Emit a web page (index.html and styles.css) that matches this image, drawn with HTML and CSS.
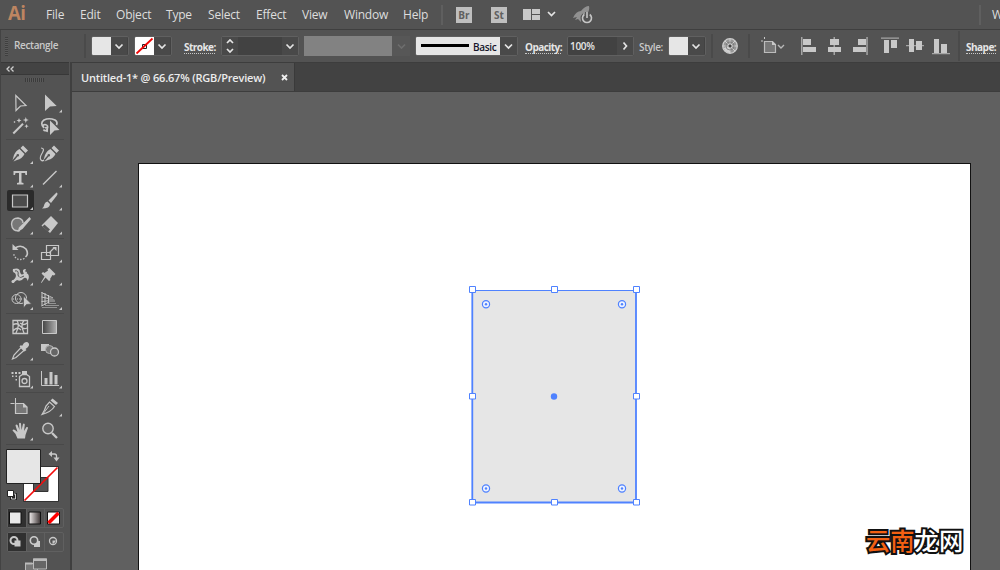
FILE: index.html
```html
<!DOCTYPE html>
<html lang="en">
<head>
<meta charset="utf-8">
<title>Untitled-1</title>
<link rel="stylesheet" href="styles.css">
</head>
<body>
<div class="app">
  <header class="menubar">
    <span class="logo">Ai</span>
    <nav class="menus">
      <span class="m-file">File</span><span class="m-edit">Edit</span><span class="m-object">Object</span><span class="m-type">Type</span><span class="m-select">Select</span><span class="m-effect">Effect</span><span class="m-view">View</span><span class="m-window">Window</span><span class="m-help">Help</span>
    </nav>
    <i class="vline"></i>
    <span class="badge br">Br</span>
    <span class="badge st">St</span>
    <svg class="workspace" width="34" height="14" viewBox="0 0 34 14"><path class="f" d="M0 2h8v11H0zM9 2h8v5H9zM9 8h8v5H9z"/><path class="chev" d="M25 5l3.5 3.5L32 5"/></svg>
    <svg class="rocket" width="22" height="20" viewBox="0 0 22 20"><path fill="#919191" d="M1 13Q4 6 9 6Q13 1 17 1Q18 5 15 9L10 10Q9 14 9 17L6 14L3 15L5 12Z"/><path fill="none" stroke="#535353" stroke-width="4" d="M12 10a4.5 4.5 0 1 0 6 0M15 7v6"/><path fill="none" stroke="#c5c5c5" stroke-width="1.6" d="M12.2 9.500a4.500 4.500 0 1 0 5.600 0M15 7v6"/></svg>
    <i class="vline far"></i>
    <span class="search">Web</span>
  </header>

  <div class="control">
    <i class="grip"></i>
    <span class="kind">Rectangle</span>
    <i class="sep"></i>
    <div class="combo fillbox"><i class="sw"></i><svg class="drop" width="16" height="18" viewBox="0 0 16 18"><path class="chev" d="M4.500 7.500L8 11L11.500 7.500"/></svg></div>
    <div class="combo strokebox"><svg width="19" height="18" viewBox="0 0 19 18"><path fill="#fff" d="M0 0h19v18H0z"/><path fill="none" stroke="#222" d="M7.500 7.500h4v4h-4z"/><path stroke="#f00505" stroke-width="1.800" d="M1.500 16.500L17.500 1.500"/></svg><svg class="drop" width="16" height="18" viewBox="0 0 16 18"><path class="chev" d="M4.500 7.500L8 11L11.500 7.500"/></svg></div>
    <span class="lbl stroke-lbl">Stroke:</span>
    <div class="combo weight"><svg width="16" height="18" viewBox="0 0 16 18"><path class="chev" d="M5 6L8 3L11 6M5 12L8 15L11 12"/></svg><i class="field"></i><svg class="drop" width="16" height="18" viewBox="0 0 16 18"><path class="chev" d="M4.500 7.500L8 11L11.500 7.500"/></svg></div>
    <div class="profile"><i></i><svg width="18" height="20" viewBox="0 0 18 20"><path class="chev off" d="M6 8.500L9.500 12L13 8.500"/></svg></div>
    <div class="combo brush"><span class="basic"><i></i>Basic</span><svg class="drop" width="17" height="18" viewBox="0 0 17 18"><path class="chev" d="M5 7.500L8.500 11L12 7.500"/></svg></div>
    <span class="lbl opacity-lbl">Opacity:</span>
    <div class="combo opacity"><span class="pct">100%</span><svg class="drop" width="16" height="18" viewBox="0 0 16 18"><path class="chev" d="M6.500 5.500L9.500 9L6.500 12.500"/></svg></div>
    <span class="style-lbl">Style:</span>
    <div class="combo stylebox"><i class="sw"></i><svg class="drop" width="16" height="18" viewBox="0 0 16 18"><path class="chev" d="M4.500 7.500L8 11L11.500 7.500"/></svg></div>
    <i class="sep s2"></i>
    <svg class="wheel" width="16" height="16" viewBox="0 0 16 16"><circle cx="8" cy="8" r="7.300" fill="#979797" stroke="#cdcdcd" stroke-width="1.300"/><path stroke="#d0d0d0" d="M8 1v14M1 8h14M3 3l10 10M13 3L3 13"/><path fill="#d0d0d0" d="M8 8L1.500 10Q4 15 8 15z"/><circle cx="8" cy="8" r="4" fill="none" stroke="#777" stroke-width=".8"/><circle cx="8" cy="8" r="1.500" fill="#444"/></svg>
    <i class="sep s3"></i>
    <svg class="bounds" width="25" height="18" viewBox="0 0 25 18"><path fill="#777" stroke="#bcbcbc" stroke-width="1.200" d="M3.500 4.500h8l3 3v8h-11z"/><path fill="#c8c8c8" d="M11 4l4 4h-4zM3 0h1v2H3zM0 3.500h2v1H0z"/><path class="chev thin" d="M17 8l3 3l3-3"/></svg>
    <svg class="align" width="150" height="19" viewBox="0 0 150 19"><path fill="#a5a5a5" d="M0 1h1.500v18H0zM32.500 1h1.500v18h-1.500zM65.300 1h1.500v18h-1.500zM80 1.500h18v1.300H80zM105 9h18v1.300h-18zM131 17h18v1.300h-18z"/><path fill="#c8c8c8" d="M2 3h8v6H2zM2 11h13v5H2zM29 3h9v6h-9zM27 11h13v5H27zM57 3h8v6h-8zM52 11h13v5H52zM83 4h5v13h-5zM90 4h6v8h-6zM108 3h5v13h-5zM115 5h6v9h-6zM133 3h5v14h-5zM140 8h6v9h-6z"/></svg>
    <i class="sep s4"></i>
    <span class="lbl shape-lbl">Shape:</span>
  </div>

  <div class="workarea">
    <aside class="tools">
      <div class="collapse"><svg width="9" height="6" viewBox="0 0 9 6"><path fill="none" stroke="#d0d0d0" stroke-width="1.300" d="M3.500 .5L1 3l2.500 2.500M7.500 .5L5 3l2.500 2.500"/></svg></div>
      <div class="handle"><i></i></div>
      <div class="toolgrid">
        <svg viewBox="0 0 29 24"><path class="l" stroke-width="1.200" d="M9.800 4.500L20 14.500L14.500 15L10 19.500z"/></svg>
        <svg viewBox="0 0 29 24"><path class="f" d="M10 3.500L21.700 15L15 15.500L10 20z"/><path class="t" d="M27 18.500v3h-3z"/></svg>
        <svg viewBox="0 0 29 23"><path class="l" stroke-width="2" d="M7.300 18.500L17 8.800"/><path class="f" d="M19.800 2l.8 2.200 2.200.8-2.200.8-.8 2.200-.8-2.200-2.200-.8 2.200-.8zM13 3l.7 1.800 1.800.7-1.800.7L13 8l-.7-1.800-1.800-.7 1.800-.7zM20.500 9l.6 1.600 1.600.6-1.600.6-.6 1.600-.6-1.600-1.600-.6 1.600-.6zM8.500 6l1 1-1 1-1-1z"/></svg>
        <svg viewBox="0 0 29 23"><path class="l" stroke-width="1.700" d="M9 13Q4.500 8 9 5Q14 2.500 20 5Q23 7 21.500 10M9 13Q6.500 10 10 9.500Q14 10 12 14.500Q10 17 8.500 14.500M10 13Q13 11 12 17"/><path class="f" d="M15 5.500L24.500 15L19.500 15.500L15 20z"/></svg>
        <i class="rule"></i>
        <svg viewBox="0 0 29 24"><path class="f" d="M17 3.500L22 8.500L19.500 11L14.500 6zM13.500 7L18.500 12Q16 17 11 18L7.500 19.500L11.500 14.500A1.300 1.300 0 1 0 10.500 13.500L6.500 18L8 13Q10 8.500 13.500 7z"/><path class="t" d="M27 19v3h-3z"/></svg>
        <svg viewBox="0 0 29 24"><path class="f" d="M19 3.500L24 8.500L21.500 11L16.500 6zM15.500 7L20.500 12Q18 17 13 18L9.500 19.500L13.500 14.500A1.300 1.300 0 1 0 12.500 13.500L8.500 18L10 13Q12 8.500 15.500 7z"/><path class="l" stroke-width="1.200" d="M6 6Q10 6 7.500 10.500Q4 16 6 18Q7.500 19.500 9 18"/></svg>
        <svg viewBox="0 0 29 24"><path class="f" d="M7.500 5H21v4h-1.500L19 7h-3.500v9.500l2 .5v1.500h-6.500V17l2-.5V7H9.500L9 9H7.500z"/><path class="t" d="M27 18.500v3h-3z"/></svg>
        <svg viewBox="0 0 29 24"><path class="l" stroke-width="1.400" d="M8 18.500L21.500 5"/><path class="t" d="M27 18.500v3h-3z"/></svg>
        <svg class="active" viewBox="0 0 27 21"><path fill="#4b4b4b" stroke="#c8c8c8" stroke-width="1.200" d="M5.500 5h15v12h-15z"/><path class="t" d="M26 17v3h-3z"/></svg>
        <svg viewBox="0 0 29 23"><path class="f" d="M21.500 2.500Q23.500 3.500 21.500 6L16 13L13.500 10.500zM12.500 11.500L15 14Q15 18.500 7 18.500Q9 17 9.500 14Q10.500 11.500 12.500 11.500z"/><path class="t" d="M27 17.500v3h-3z"/></svg>
        <svg viewBox="0 0 29 24"><path fill="#777" stroke="#c3c3c3" stroke-width="1.400" d="M14 17.500Q6 19 5.500 11Q6 5 12 5Q17 6 17 10"/><path class="f" d="M23.500 4L25 6L16.500 16L11.500 19L13 14.500z"/><path class="t" d="M27 18.500v3h-3z"/></svg>
        <svg viewBox="0 0 29 24"><path class="f" d="M16 3L23 10L15 20L6.500 12.500z"/><path fill="#555" d="M9.500 11.500L15 16.500L13 18.500L7.500 13.500z"/><path class="t" d="M27 18.500v3h-3z"/></svg>
        <i class="rule"></i>
        <svg viewBox="0 0 29 24"><path class="l" stroke-width="1.600" d="M9 7Q15 3 20 8Q23 13 19.500 16"/><path class="l" stroke-width="1.300" stroke-dasharray="1.500 1.500" d="M18.500 17.500Q10 21 7.500 12.500"/><path class="f" d="M6.500 3v6h6z"/><path class="t" d="M27 18.500v3h-3z"/></svg>
        <svg viewBox="0 0 29 24"><path class="l" stroke-width="1.200" d="M11.500 4.500h12v10h-12zM6.500 11.500h9v7h-9zM14 12l5-5"/><path class="f" d="M21.500 6v4l-4-4z"/><path class="t" d="M27 18.500v3h-3z"/></svg>
        <svg viewBox="0 0 29 23"><path class="f" d="M7 4Q14 2 14 7Q15 11 18 9Q15 4 20 4Q18 7 22 9Q24 12 21.500 16Q21 12 18 13Q15 17 11 15L7 18L6 16Q12 12 9 8Q6 7 7 4z"/><path stroke="#535353" fill="none" d="M9 6Q13 5 12 10Q13 14 18 11"/><path class="l" d="M6 17L21 7"/><circle class="f" cx="7" cy="16.500" r="1.500"/><path class="t" d="M27 17.500v3h-3z"/></svg>
        <svg viewBox="0 0 29 23"><path class="f" d="M14.500 3L20.500 9L19 10.500L17.500 10L15 14L15.500 15L14 16L10.500 12.500L6.500 18L6 17.500L9.500 11.500L6.500 8.500L8 7L9.500 8L13 5.500L12.500 4z"/><path class="t" d="M27 17.500v3h-3z"/></svg>
        <svg viewBox="0 0 29 24"><circle class="l" cx="10.500" cy="11" r="4.500"/><ellipse class="l" cx="15" cy="10" rx="5.500" ry="5.500"/><path class="l" stroke-dasharray="1 1" d="M7 11h11"/><path class="f" stroke="#535353" stroke-width=".7" d="M17.500 8L25.500 16L20.500 16.500L17.500 20z"/><path class="t" d="M27 19v3h-3z"/></svg>
        <svg viewBox="0 0 29 24"><path class="l" d="M7 4v14M10 5v12M13.500 7v8M6.500 4.500L18 10M6.500 9L18 11.500M6.500 13.500L17 12.500M6.500 18L16 13"/><path fill="#858585" d="M14 8L20 12v2h-6z"/><path class="l" stroke-width=".8" opacity=".7" d="M13 15.500h8M10 17.500h14M7 19.500h15"/><path class="t" d="M27 19v3h-3z"/></svg>
        <i class="rule"></i>
        <svg viewBox="0 0 29 24"><path class="l" stroke-width="1.300" d="M7 5.500h14.500v13H7zM7 10Q11 7 14 11Q18 15 21 13M11 5.500Q14 10 10 18M18 5.500Q14 10 18 18M7 16Q11 11 15 15M14 8Q18 11 21 8"/></svg>
        <svg viewBox="0 0 29 24"><defs><linearGradient id="g1"><stop offset="0" stop-color="#444"/><stop offset="1" stop-color="#b0b0b0"/></linearGradient></defs><path fill="url(#g1)" stroke="#c8c8c8" d="M7.500 5.500h14v13h-14z"/></svg>
        <svg viewBox="0 0 29 24"><path class="f" d="M18 4Q21 2 22.500 4Q24 6 21.500 8.500L19.500 10L20.500 11L18.500 12.500L13.500 7.500L15 6L16 7z"/><path fill="#555" stroke="#c8c8c8" stroke-width="1.200" d="M15 8.500L18 11.500L10 18.500L6.500 20L8 16z"/><path class="t" d="M27 18.500v3h-3z"/></svg>
        <svg viewBox="0 0 29 24"><path class="f" d="M6 5h8v7H6z"/><circle cx="14.500" cy="10.500" r="4" fill="#777" stroke="#b4b4b4"/><circle cx="19.500" cy="13" r="4" fill="#666" stroke="#c8c8c8" stroke-width="1.300"/></svg>
        <i class="rule"></i>
        <svg viewBox="0 0 29 24"><path class="f" d="M5.500 5h2v2h-2zM9 5h2v2H9zM12.500 5h2v2h-2zM6 8.500h1.500V10H6zM9.500 8.500H11V10H9.500zM9.500 12H11v1.500H9.500zM16 4h5v3h-5z"/><path class="l" stroke-width="1.300" d="M13.500 9.500l3-2h4l3 2v10h-10z"/><circle class="l" cx="18.500" cy="14" r="2.500" stroke-width="1.300"/><path class="t" d="M27 18.500v3h-3z"/></svg>
        <svg viewBox="0 0 29 24"><path class="l" d="M6.500 4v14.500H24"/><path class="f" d="M9.500 11h3v6.500h-3zM14.500 5h3v12.500h-3zM19.500 8h3v9.500h-3z"/><path class="t" d="M27 18.500v3h-3z"/></svg>
        <i class="rule"></i>
        <svg viewBox="0 0 29 24"><path fill="#777" stroke="#c8c8c8" stroke-width="1.200" d="M9.500 8.500h8l3.500 3.500v6.500H9.500z"/><path class="f" d="M17 8l4.500 4.500H17zM9 3h1v5H9zM4.500 8h4v1h-4z"/></svg>
        <svg viewBox="0 0 29 24"><path class="f" d="M17.500 3.500L23 8L21 10L15.500 5.500z"/><path fill="#555" stroke="#c8c8c8" stroke-width="1.200" d="M14.500 7L19.500 11.500Q16 17 7 19.500Q10 15 11 11z"/><path class="l" d="M8 19l6-8"/><path class="t" d="M27 18.500v3h-3z"/></svg>
        <svg viewBox="0 0 29 24"><path class="f" d="M11.500 19.500Q10.500 15 6.500 11.500Q7 10 9 11L11.500 13L9.500 6.500Q10 5 11.500 6L13.500 11L13 4.500Q14 3 15 4.500L15.500 11L17 5Q18 4 18.800 5.500L18 12L20.500 8Q22 7.500 22 9L19.500 16L19 19.500z"/><path class="t" d="M27 18.500v3h-3z"/></svg>
        <svg viewBox="0 0 29 24"><circle cx="13" cy="9.500" r="5.200" fill="#626262" stroke="#c8c8c8" stroke-width="1.400"/><path class="l" stroke-width="2.300" d="M17 14L22 19"/></svg>
        <i class="rule last"></i>
      </div>
      <svg class="paint" width="58" height="60" viewBox="6 446 58 60"><path fill="none" stroke="#333" d="M23.500 466.500h35v35h-35z"/><path fill="#fff" fill-rule="evenodd" d="M24 467h34v34H24zM33 477v15h15v-15z"/><path fill="none" stroke="#333" d="M33.500 477.500h14.500v14h-14.500z"/><path stroke="#f40b0b" stroke-width="1.700" d="M24.500 500.500L57.500 467.500"/><path fill="#e6e6e6" stroke="#222" d="M6.500 449.500h34v34h-34z"/><path fill="none" stroke="#ccc" stroke-width="1.300" d="M51.500 454h3q2 0 2 2v3"/><path class="f" d="M52 451v6l-3.500-3zM53.500 457.500h6l-3 4z"/><path fill="#222" d="M10 493h7v7h-7z"/><path fill="none" stroke="#ccc" d="M14 494h1.500v5h-4v-2"/><path fill="#fff" stroke="#222" d="M7.500 490.500h6v6h-6z"/></svg>
      <div class="modes">
        <span class="on"><svg viewBox="0 0 18 18"><path fill="#e9e9e9" stroke="#111" d="M2.500 3h11.500v12H2.500z"/></svg></span>
        <span><svg viewBox="0 0 18 18"><defs><linearGradient id="g2"><stop offset="0" stop-color="#f2eeee"/><stop offset="1" stop-color="#3c3434"/></linearGradient></defs><path fill="url(#g2)" stroke="#111" d="M3 3h11.500v12H3z"/></svg></span>
        <span><svg viewBox="0 0 18 18"><path fill="#fff" stroke="#111" d="M3.500 3h12v12h-12z"/><path stroke="#f00" stroke-width="3.500" d="M4.500 14L14.500 4"/></svg></span>
      </div>
      <div class="modes draw">
        <span class="on"><svg viewBox="0 0 18 18"><circle class="l" cx="7" cy="7.500" r="3.500" stroke-width="2"/><path class="f" d="M7.500 7.500h6v6h-6z"/></svg></span>
        <span><svg viewBox="0 0 18 18"><path class="f" d="M8 8h6v6H8z"/><circle cx="8" cy="7.500" r="3.700" fill="#555" stroke="#ccc" stroke-width="1.600"/></svg></span>
        <span><svg viewBox="0 0 18 18"><circle class="l" cx="9" cy="8" r="3.500" stroke-width="1.300"/><path class="f" d="M8.500 7.500h3.500L10 10.500H8.500z"/></svg></span>
      </div>
      <svg class="screenmode" width="24" height="14" viewBox="0 0 24 14"><path fill="#777" stroke="#bbb" d="M.5 5.500h12v9H.5z"/><path fill="#666" stroke="#bbb" d="M8.500 1h13v10h-13z"/><path fill="#bbb" d="M8 .5h14v2.500H8zM0 4.500h7.500v2H0z"/></svg>
    </aside>

    <main class="document">
      <div class="tabs"><div class="tab"><span>Untitled-1* @ 66.67% (RGB/Preview)</span><svg width="7" height="7" viewBox="0 0 7 7"><path stroke="#eee" stroke-width="1.800" d="M1 1l5 5M6 1L1 6"/></svg></div></div>
      <div class="canvas">
        <div class="artboard">
          <svg class="selection" width="172" height="220" viewBox="469 286 172 220">
            <path fill="#e6e6e6" d="M472 290h164v212H472z"/>
            <path fill="none" stroke="#4f82ff" d="M472 290.500h164" stroke-width="1.200"/>
            <path fill="none" stroke="#4f82ff" stroke-width="1.800" d="M472.300 290v212.500H636V290"/>
            <g fill="#fff" stroke="#4f82ff"><path d="M469.500 286.500h6v6h-6zM551.500 286.500h6v6h-6zM633.500 286.500h6v6h-6zM469.500 393.500h6v5.500h-6zM633.500 393.500h6v5.500h-6zM469.500 499.500h6v5.500h-6zM551.500 499.500h6v5.500h-6zM633.500 499.500h6v5.500h-6z"/></g>
            <g fill="#eef3ff" stroke="#4f82ff" stroke-width="1.200"><circle cx="486" cy="304.300" r="3.600"/><circle cx="622" cy="304.300" r="3.600"/><circle cx="486" cy="488.500" r="3.600"/><circle cx="622" cy="488.500" r="3.600"/></g>
            <g fill="#4f82ff"><circle cx="486" cy="304.300" r="1.200"/><circle cx="622" cy="304.300" r="1.200"/><circle cx="486" cy="488.500" r="1.200"/><circle cx="622" cy="488.500" r="1.200"/><circle cx="554" cy="396.500" r="3.200"/></g>
          </svg>
          <div class="watermark"><span>云南</span><b>龙网</b></div>
        </div>
      </div>
    </main>
  </div>
</div>
</body>
</html>
```
FILE: styles.css
```css
* { box-sizing: border-box; }
body { margin: 0; overflow: hidden; }
svg { display: block; flex: none; }
i { display: block; flex: none; }
.f { fill: #c8c8c8; }
.l { fill: none; stroke: #c8c8c8; }
.t { fill: #c8c8c8; }
.chev { fill: none; stroke: #e4e4e4; stroke-width: 1.7; }
.chev.off { stroke: #6d6d6d; }
.chev.thin { stroke: #b8b8b8; stroke-width: 1.4; }

.app {
  width: 1000px;
  height: 570px;
  display: flex;
  flex-direction: column;
  background: #535353;
  color: #dedede;
  font-family: "Open Sans", "Noto Sans", sans-serif;
  white-space: nowrap;
  overflow: hidden;
}

/* Menu bar */
.menubar { height: 30px; flex: none; display: flex; align-items: center; border-bottom: 1px solid #3f3f3f; }
.menubar > *, .menus > *, .control > * { flex: none; }
.logo { width: 38px; padding-left: 8px; font: bold 20px/26px "Open Sans", sans-serif; letter-spacing: -0.5px; color: #bd8561; transform: scaleX(.92); transform-origin: 8px 0; height: 29px; }
.menus { display: flex; width: 403px; padding-left: 8px; font-size: 12px; line-height: 29px; letter-spacing: -0.2px; }
.m-file { width: 34px; }
.m-edit { width: 36px; }
.m-object { width: 50px; }
.m-type { width: 42px; }
.m-select { width: 48px; }
.m-effect { width: 46px; }
.m-view { width: 42px; }
.m-window { width: 59px; }
.vline { width: 2px; height: 20px; background: #5f5f5f; }
.badge { width: 16px; height: 16px; background: #bfbfbf; color: #606060; font: bold 10px/16px "Open Sans", sans-serif; text-align: center; }
.br { margin-left: 13px; }
.st { margin-left: 19px; }
.workspace { margin: -2px 0 0 16px; }
.rocket { margin-left: 15px; }
.far { margin-left: 385px; }
.search { margin-left: 11px; font-size: 12px; line-height: 27px; }

/* Control bar */
.control { height: 32px; flex: none; display: flex; align-items: center; border-left: 1px solid #434343; font-size: 10px; line-height: 14px; }
.grip { width: 3px; height: 19px; margin-left: 4px; background: repeating-linear-gradient(#3f3f3f 0 1px, #5b5b5b 1px 2px); }
.kind { width: 70px; margin-left: 6px; letter-spacing: -0.35px; font-weight: 600; color: #c9c9c9; margin-top: -2px; }
.sep { width: 2px; height: 24px; background: #4a4a4a; }
.combo { display: flex; height: 20px; border: 1px solid #606060; border-radius: 2px; background: #424242; overflow: hidden; }
.drop { background: #494949; }
.fillbox { width: 38px; margin-left: 5px; }
.sw { width: 19px; height: 18px; background: #e6e6e6; }
.strokebox { width: 38px; margin-left: 5px; }
.lbl { font-weight: 700; color: #e6e6e6; line-height: 12px; border-bottom: 1px dotted #c8c8c8; margin-top: 2px; height: 13px; }
.stroke-lbl { width: 31px; margin-left: 12px; letter-spacing: -0.55px; }
.weight { width: 78px; margin-left: 6px; }
.weight > svg { background: #494949; }
.field { width: 44px; height: 18px; background: #424242; }
.profile { display: flex; margin-left: 5px; background: #575757; }
.profile i { width: 88px; height: 20px; background: #828282; }
.brush { width: 103px; margin-left: 5px; }
.basic { width: 84px; height: 18px; display: flex; align-items: center; background: #e6e6e6; color: #16162a; font-weight: 600; letter-spacing: -0.35px; padding-top: 2px; flex: none; }
.basic i { width: 48px; height: 3px; margin: -3px 4px 0 5px; background: #000; }
.opacity-lbl { width: 36px; margin-left: 7px; letter-spacing: -0.55px; }
.opacity { width: 67px; margin-left: 6px; }
.pct { width: 49px; padding-left: 2px; line-height: 19px; font-weight: 600; letter-spacing: -0.3px; color: #e6e6e6; }
.style-lbl { width: 24px; margin-left: 5px; letter-spacing: -0.35px; font-weight: 600; color: #c9c9c9; margin-top: 1px; }
.stylebox { width: 38px; margin-left: 5px; }
.s2 { margin-left: 5px; }
.wheel { margin-left: 9px; }
.s3 { margin-left: 10px; }
.bounds { margin-left: 11px; }
.align { margin: -2px 0 0 15px; }
.s4 { margin-left: 7px; height: 30px; }
.shape-lbl { width: 30px; margin-left: 6px; letter-spacing: -0.5px; }

/* Tools panel */
.workarea { flex: 1; display: flex; min-height: 0; }
.tools { width: 72px; flex: none; border-left: 1px solid #434343; border-right: 2px solid #3f3f3f; padding-right: 1px; }
.collapse { height: 13px; padding: 3px 0 0 5px; background: #434343; border-top: 1px solid #383838; border-bottom: 1px solid #383838; }
.handle { height: 16px; padding: 3px 0 0 24px; }
.handle i { width: 19px; height: 4px; background: repeating-linear-gradient(90deg, #3b3b3b 0 1px, #5a5a5a 1px 2px); }
.toolgrid {
  margin-left: 5px;
  display: grid;
  grid-template-columns: 29px 29px;
  grid-template-rows: 24px 23px 4px 24px 24px 23px 24px 4px 24px 23px 24px 3px 24px 24px 4px 24px 4px 24px 24px 3px;
}
.toolgrid svg { width: 29px; height: 100%; overflow: visible; }
.toolgrid .active { width: 27px; height: 21px; margin-left: 1px; background: #2b2b2b; border-radius: 2px; }
.rule { grid-column: 1 / 3; height: 1px; margin-top: 1px; background: #494949; }
.paint { margin-left: 5px; }
.modes { display: flex; width: 57px; height: 20px; margin: 2px 0 0 6px; border: 1px solid #606060; border-radius: 2px; }
.modes span { width: 18px; flex: 1; border-right: 1px solid #606060; }
.modes span:last-child { border: 0; }
.modes svg { width: 18px; height: 18px; margin-left: -1px; }
.modes .on { background: #303030; }
.draw { margin-top: 4px; }
.screenmode { margin: 6px 0 0 24px; }

/* Document */
.document { flex: 1; display: flex; flex-direction: column; min-width: 0; }
.tabs { height: 30px; flex: none; background: #424242; border-top: 1px solid #3d3d3d; border-bottom: 1px solid #3d3d3d; display: flex; }
.tab { width: 223px; display: flex; align-items: center; padding-left: 9px; background: #535353; border-right: 1px solid #3a3a3a; font-size: 11px; font-weight: 600; color: #ececec; letter-spacing: -0.19px; }
.tab span { width: 200px; padding-top: 1px; flex: none; }
.canvas { flex: 1; background: #606060; padding: 71px 0 0 66px; }
.artboard { position: relative; width: 833px; height: 420px; background: #fff; border: 1px solid #111; }
.selection { position: absolute; left: 330px; top: 122px; }
.watermark { position: absolute; left: 727px; top: 357px; font: 500 24.3px/38px "Noto Sans CJK SC", sans-serif; -webkit-text-stroke: 4px #111; paint-order: stroke fill; }
.watermark span { color: #f36012; }
.watermark b { color: #fff; font-weight: 500; }
```
